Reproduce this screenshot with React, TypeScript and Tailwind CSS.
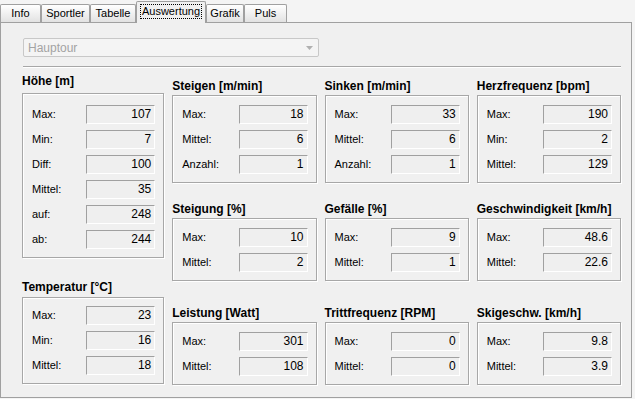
import React from 'react';

type Row = { label: string; value: string };

type Group = {
  title: string;
  rows: Row[];
  mt: string;
  titleMb: string;
  pt: string;
};

const tabs = [
  { name: 'Info', w: 'w-[41px]' },
  { name: 'Sportler', w: 'w-[49px]' },
  { name: 'Tabelle', w: 'w-[46px]' },
  { name: 'Auswertung', w: 'w-[70px]', active: true },
  { name: 'Grafik', w: 'w-[38px]' },
  { name: 'Puls', w: 'w-[43px]' },
];

// column data (left to right)
const columns: { w: string; mt: string; groups: Group[] }[] = [
  {
    w: 'w-[143px]',
    mt: 'mt-[6px]',
    groups: [
      {
        title: 'Höhe [m]',
        mt: 'mt-0',
        titleMb: 'mb-[5px]',
        pt: 'pt-[11px]',
        rows: [
          { label: 'Max:', value: '107' },
          { label: 'Min:', value: '7' },
          { label: 'Diff:', value: '100' },
          { label: 'Mittel:', value: '35' },
          { label: 'auf:', value: '248' },
          { label: 'ab:', value: '244' },
        ],
      },
      {
        title: 'Temperatur [°C]',
        mt: 'mt-[22px]',
        titleMb: 'mb-[3px]',
        pt: 'pt-[8px]',
        rows: [
          { label: 'Max:', value: '23' },
          { label: 'Min:', value: '16' },
          { label: 'Mittel:', value: '18' },
        ],
      },
    ],
  },
  {
    w: 'w-[145px]',
    mt: 'mt-[11px]',
    groups: [
      {
        title: 'Steigen [m/min]',
        mt: 'mt-0',
        titleMb: 'mb-[2px]',
        pt: 'pt-[9px]',
        rows: [
          { label: 'Max:', value: '18' },
          { label: 'Mittel:', value: '6' },
          { label: 'Anzahl:', value: '1' },
        ],
      },
      {
        title: 'Steigung [%]',
        mt: 'mt-[19px]',
        titleMb: 'mb-[2px]',
        pt: 'pt-[9px]',
        rows: [
          { label: 'Max:', value: '10' },
          { label: 'Mittel:', value: '2' },
        ],
      },
      {
        title: 'Leistung [Watt]',
        mt: 'mt-[25px]',
        titleMb: 'mb-[2px]',
        pt: 'pt-[9px]',
        rows: [
          { label: 'Max:', value: '301' },
          { label: 'Mittel:', value: '108' },
        ],
      },
    ],
  },
  {
    w: 'w-[145px]',
    mt: 'mt-[11px]',
    groups: [
      {
        title: 'Sinken [m/min]',
        mt: 'mt-0',
        titleMb: 'mb-[2px]',
        pt: 'pt-[9px]',
        rows: [
          { label: 'Max:', value: '33' },
          { label: 'Mittel:', value: '6' },
          { label: 'Anzahl:', value: '1' },
        ],
      },
      {
        title: 'Gefälle [%]',
        mt: 'mt-[19px]',
        titleMb: 'mb-[2px]',
        pt: 'pt-[9px]',
        rows: [
          { label: 'Max:', value: '9' },
          { label: 'Mittel:', value: '1' },
        ],
      },
      {
        title: 'Trittfrequenz [RPM]',
        mt: 'mt-[25px]',
        titleMb: 'mb-[2px]',
        pt: 'pt-[9px]',
        rows: [
          { label: 'Max:', value: '0' },
          { label: 'Mittel:', value: '0' },
        ],
      },
    ],
  },
  {
    w: 'w-[145px]',
    mt: 'mt-[11px]',
    groups: [
      {
        title: 'Herzfrequenz [bpm]',
        mt: 'mt-0',
        titleMb: 'mb-[2px]',
        pt: 'pt-[9px]',
        rows: [
          { label: 'Max:', value: '190' },
          { label: 'Min:', value: '2' },
          { label: 'Mittel:', value: '129' },
        ],
      },
      {
        title: 'Geschwindigkeit [km/h]',
        mt: 'mt-[19px]',
        titleMb: 'mb-[2px]',
        pt: 'pt-[9px]',
        rows: [
          { label: 'Max:', value: '48.6' },
          { label: 'Mittel:', value: '22.6' },
        ],
      },
      {
        title: 'Skigeschw. [km/h]',
        mt: 'mt-[25px]',
        titleMb: 'mb-[2px]',
        pt: 'pt-[9px]',
        rows: [
          { label: 'Max:', value: '9.8' },
          { label: 'Mittel:', value: '3.9' },
        ],
      },
    ],
  },
];

const Field: React.FC<Row> = ({ label, value }) => (
  <div className="flex items-center h-[19px]">
    <span className="flex-1 text-[11px] leading-[19px] text-black">{label}</span>
    <div className="w-[69px] h-[19px] border border-t-[#a0a0a0] border-l-[#a0a0a0] border-b-white border-r-white bg-[#efefef] text-right pr-[3px] text-[12px] leading-[17px] text-black">
      {value}
    </div>
  </div>
);

const GroupBox: React.FC<{ g: Group }> = ({ g }) => (
  <div className={g.mt}>
    <div className={`h-[14px] text-[12px] leading-[14px] font-bold text-black whitespace-nowrap ${g.titleMb}`}>
      {g.title}
    </div>
    <div
      className={`border border-[#a7a7a7] shadow-[inset_1px_1px_0_#ffffff,1px_1px_0_#ffffff] pl-[9px] pr-[8px] pb-[8px] flex flex-col gap-[6px] ${g.pt}`}
    >
      {g.rows.map((r) => (
        <Field key={r.label} {...r} />
      ))}
    </div>
  </div>
);

const App: React.FC = () => {
  return (
    <div
      className="w-[635px] h-[399px] bg-[#f4f4f4] overflow-hidden flex flex-col"
      style={{ fontFamily: '"Liberation Sans", Arial, sans-serif' }}
    >
      {/* tab strip */}
      <div className="flex items-end h-[22px] shrink-0">
        {tabs.map((t) =>
          t.active ? (
            <div
              key={t.name}
              className={`${t.w} h-[22px] relative z-10 -mb-[1px] border border-b-0 border-[#a0a0a0] rounded-t-[2px] bg-[#f0f0f0] flex items-center justify-center pb-[2px]`}
            >
              <span className="border border-dotted border-black px-[1px] text-[11px] leading-[13px] text-black">
                {t.name}
              </span>
            </div>
          ) : (
            <div
              key={t.name}
              className={`${t.w} h-[18px] border border-b-0 border-[#a0a0a0] rounded-t-[2px] bg-gradient-to-b from-white to-[#e2e2e2] flex items-center justify-center text-[11px] text-black`}
            >
              {t.name}
            </div>
          )
        )}
      </div>

      {/* tab page */}
      <div className="w-[632px] h-[376px] border border-[#a0a0a0] bg-[#f0f0f0] pl-[21px] pr-[10px] pt-[15px]">
        {/* combobox (disabled) */}
        <div className="ml-[1px] w-[296px] h-[19px] border border-[#c8c8c8] rounded-[2px] bg-[#f4f4f4] flex items-center justify-between pl-[4px] pr-[5px]">
          <span className="text-[12px] text-[#a3a3a3]">Hauptour</span>
          <svg width="7" height="4" viewBox="0 0 7 4">
            <path d="M0 0 H7 L3.5 4 Z" fill="#b0b0b0" />
          </svg>
        </div>

        {/* separator */}
        <div className="ml-[1px] mt-[9px] w-[598px] h-[2px] border-t border-[#a7a7a7] border-b border-b-white" />

        {/* groups */}
        <div className="flex gap-[8px]">
          {columns.map((c, i) => (
            <div key={i} className={`${c.w} ${c.mt} flex flex-col`}>
              {c.groups.map((g) => (
                <GroupBox key={g.title} g={g} />
              ))}
            </div>
          ))}
        </div>
      </div>
    </div>
  );
};

export default App;
